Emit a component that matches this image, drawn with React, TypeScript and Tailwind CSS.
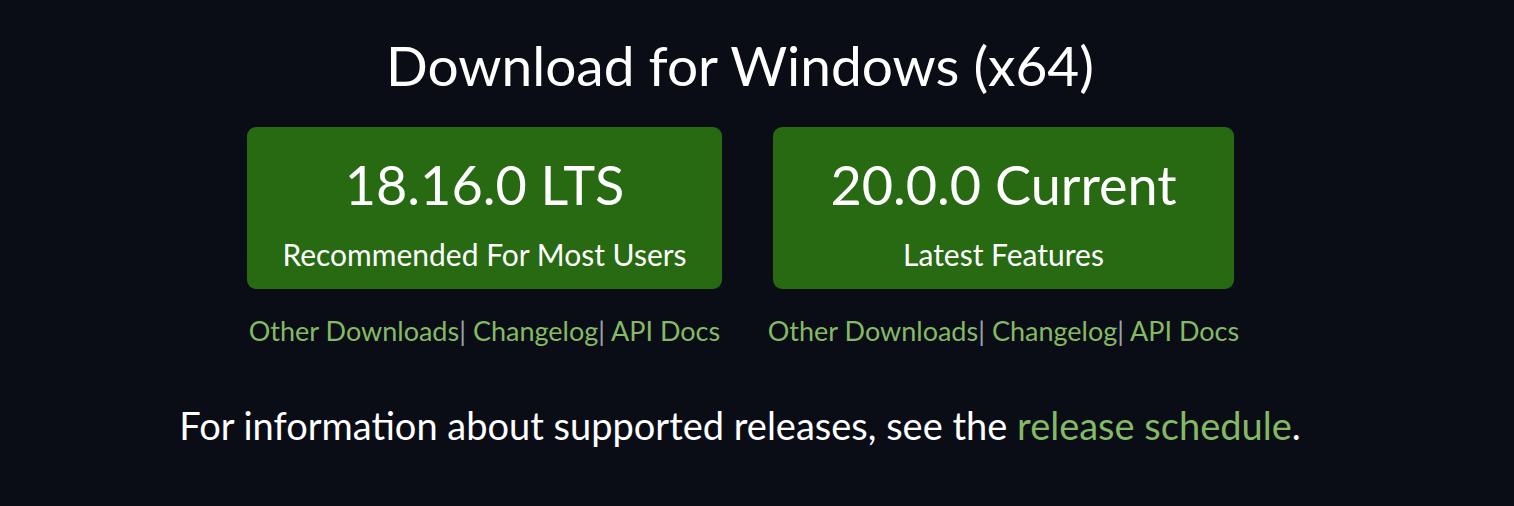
const links = ['Other Downloads', 'Changelog', 'API Docs'];

function DownloadColumn({ version, label, width }: { version: string; label: string; width: string }) {
  return (
    <div className="flex w-[478px] flex-col items-center">
      <a
        href="#"
        className={`flex h-[162px] ${width} flex-col items-center rounded-[9px] bg-[#276a12] pt-[26px] text-white`}
      >
        <span className="text-[54px] leading-[64px]">{version}</span>
        <span className="mt-[18px] text-[30px] leading-[38px]">{label}</span>
      </a>
      <div className="mt-[24px] whitespace-nowrap text-[27px] leading-[36px] text-[#84ba64]">
        {links.map((l, i) => (
          <span key={l}>
            <a href="#">{l}</a>
            {i < links.length - 1 && <span className="text-[#9aa3ad]">| </span>}
          </span>
        ))}
      </div>
    </div>
  );
}

export default function App() {
  return (
    <div
      className="min-h-[506px] w-full bg-[#0a0d16] pr-[34px] pt-[30px]"
      style={{ fontFamily: 'Lato, "Noto Sans", sans-serif' }}
    >
      <div className="flex flex-col items-center">
        <h1 className="text-[55px] leading-[70px] text-white">Download for Windows (x64)</h1>

        <div className="ml-[8px] mt-[27px] flex gap-[41px]">
          <DownloadColumn version="18.16.0 LTS" label="Recommended For Most Users" width="w-[475px]" />
          <DownloadColumn version="20.0.0 Current" label="Latest Features" width="w-[461px]" />
        </div>

        <p className="mt-[51px] text-[38px] leading-[50px] text-white">
          For information about supported releases, see the{' '}
          <a href="#" className="text-[#84ba64]">
            release schedule
          </a>
          .
        </p>
      </div>
    </div>
  );
}
